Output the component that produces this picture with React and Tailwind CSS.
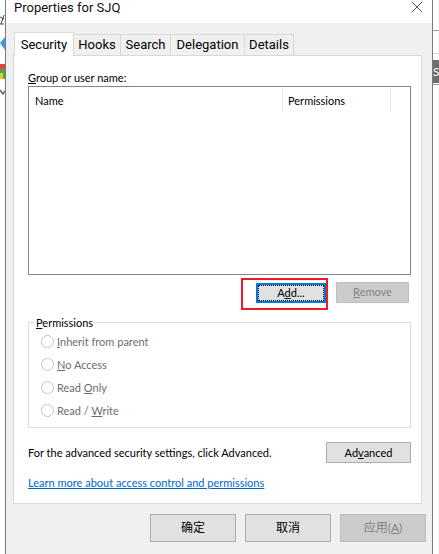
import { X } from 'lucide-react'

const tabs = [
  { label: 'Hooks', w: 'w-[48px]' },
  { label: 'Search', w: 'w-[51px]' },
  { label: 'Delegation', w: 'w-[75px]' },
  { label: 'Details', w: 'w-[50px]' },
]

const radios = [
  { pre: '', key: 'I', post: 'nherit from parent' },
  { pre: '', key: 'N', post: 'o Access' },
  { pre: 'Read ', key: 'O', post: 'nly' },
  { pre: 'Read / ', key: 'W', post: 'rite' },
]

// bits of the desktop showing left of the dialog
function LeftStrip() {
  return (
    <svg width="5" height="110" viewBox="0 0 5 110" className="block">
      <path d="M0 17 L4 19 M4 15 L1 24 M0 24 L4 24" stroke="#444" strokeWidth="1" fill="none" />
      <path d="M0 43 L5 37 L5 50 Z" fill="#3a9be0" />
      <rect x="0" y="64" width="5" height="5" fill="#e8403a" />
      <rect x="0" y="69" width="5" height="4" fill="#3fae4a" />
      <rect x="0" y="73" width="3" height="6" fill="#f2c81e" />
      <rect x="3" y="73" width="2" height="6" fill="#3fae4a" />
      <path d="M0 90 L3 94 L5 91" stroke="#666" strokeWidth="1.5" fill="none" />
    </svg>
  )
}

function RightStrip() {
  return (
    <div className="w-[6px] flex flex-col overflow-hidden">
      <div className="h-[30px]" />
      <div className="h-px bg-[#a0a0a0]" />
      <div className="h-[22px]" />
      <div className="h-px bg-[#d8d8d8]" />
      <div className="h-[6px]" />
      <div className="h-[23px] bg-[#6d6d6d] text-white text-[12px] leading-[23px] whitespace-nowrap">SV</div>
      <div className="h-px mt-px bg-[#a0a0a0]" />
    </div>
  )
}

function Btn({ className = '', disabled, children }) {
  return (
    <div
      className={
        'flex items-center justify-center border ' +
        (disabled ? 'bg-[#cccccc] border-[#bfbfbf] text-[#838383] ' : 'bg-[#e1e1e1] border-[#adadad] text-black ') +
        className
      }
    >
      {children}
    </div>
  )
}

export default function App() {
  return (
    <div className="w-[439px] h-[554px] bg-white flex overflow-hidden text-[11px] text-black [font-family:'Lato','Noto_Sans_CJK_SC',sans-serif]">
      <div className="w-[5px]">
        <LeftStrip />
      </div>

      {/* Dialog */}
      <div className="w-[428px] border-x border-[#7a7a7a] bg-[#f0f0f0] flex flex-col">
        <div className="h-[23px] bg-white flex items-start justify-between pl-[8px] pr-[5px]">
          <span className="text-[13px] leading-[15px] text-[#111] [font-family:'Roboto',sans-serif]">Properties for SJQ</span>
          <X size={20} strokeWidth={0.8} className="text-black -mt-[3px]" />
        </div>

        {/* Tabs */}
        <div className="flex items-end h-[23px] mt-[10px] pl-[8px] relative z-10 -mb-px text-[13px] [font-family:'Roboto',sans-serif]">
          <div className="w-[60px] h-[24px] bg-white border border-b-0 border-[#d9d9d9] flex items-center justify-center">
            Security
          </div>
          {tabs.map(t => (
            <div
              key={t.label}
              className={t.w + ' h-[22px] -ml-px first:ml-0 bg-[#f0f0f0] border border-[#d9d9d9] flex items-center justify-center'}
            >
              {t.label}
            </div>
          ))}
        </div>

        {/* Panel */}
        <div className="ml-[7px] w-[409px] h-[449px] bg-white border border-[#d9d9d9] px-[14px]">
          <div className="mt-[13px] h-[16px] leading-[16px] pt-px">
            <u>G</u>roup or user name:
          </div>
          <div className="mt-px w-[383px] h-[189px] border border-[#828790] bg-white">
            <div className="flex h-[24px] mt-px">
              <div className="w-[254px] pl-[6px] pt-px border-r border-[#e5e5e5] leading-[24px]">Name</div>
              <div className="w-[108px] pl-[5px] pt-px border-r border-[#e5e5e5] leading-[24px]">Permissions</div>
            </div>
          </div>

          <div className="flex justify-end items-start h-[21px] mt-[7px] w-[381px] gap-[10px]">
            <div className="relative mt-px">
              <div className="w-[70px] h-[20px] border-2 border-[#0078d7] bg-[#e1e1e1]">
                <div className="w-full h-full border border-dotted border-black flex items-center justify-center">
                  <span>A<u>d</u>d...</span>
                </div>
              </div>
              <div className="absolute -left-[15px] -top-[5px] w-[87px] h-[32px] border-2 border-[#ed1c24]" />
            </div>
            <Btn disabled className="w-[73px] h-[21px]">
              <span><u>R</u>emove</span>
            </Btn>
          </div>

          {/* Permissions group */}
          <fieldset className="mt-[11px] w-[383px] border border-[#dcdcdc] pl-[12px] pb-[5px]">
            <legend className="-ml-[6px] px-[1px] h-[16px] leading-[17px]">
              <u>P</u>ermissions
            </legend>
            {radios.map(r => (
              <div key={r.key} className="flex items-center h-[23px] text-[#6d6d6d]">
                <span className="w-[13px] h-[13px] rounded-full border border-[#c4c4c4] bg-white" />
                <span className="ml-[3px] pt-[2px]">
                  {r.pre}<u>{r.key}</u>{r.post}
                </span>
              </div>
            ))}
          </fieldset>

          <div className="mt-[14px] w-[383px] flex items-center justify-between h-[21px]">
            <span className="pt-[2px]">For the advanced security settings, click Advanced.</span>
            <Btn className="w-[85px] h-[21px]">
              <span className="pt-[2px]">Ad<u>v</u>anced</span>
            </Btn>
          </div>

          <a className="block mt-[12px] h-[16px] leading-[16px] text-[#0066cc] underline">
            Learn more about access control and permissions
          </a>
        </div>

        {/* Footer buttons */}
        <div className="flex mt-[10px] ml-[144px] gap-[9px] text-[12px]">
          <Btn className="w-[86px] h-[28px]">确定</Btn>
          <Btn className="w-[86px] h-[28px]">取消</Btn>
          <Btn disabled className="w-[86px] h-[28px]">
            <span>应用(<u>A</u>)</span>
          </Btn>
        </div>
      </div>

      <RightStrip />
    </div>
  )
}
